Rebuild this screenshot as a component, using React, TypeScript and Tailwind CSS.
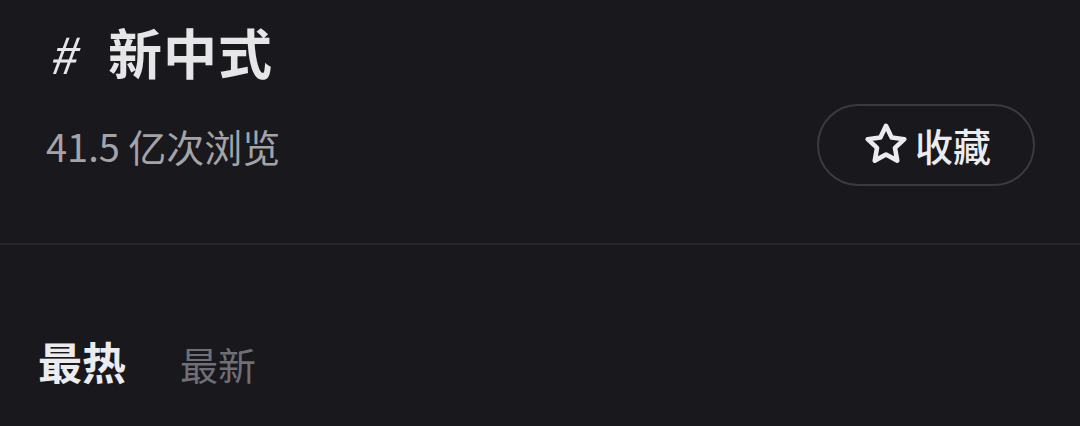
import React from "react";

export default function App() {
  const font = { fontFamily: '"Noto Sans CJK SC", "Noto Sans", sans-serif' };
  return (
    <div className="w-[1080px] h-[426px] bg-[#18181d] overflow-hidden flex flex-col" style={font}>
      <div className="flex flex-col pl-[46px] pr-[45px] pt-[16px] h-[243px]">
        <div className="flex items-center h-[72px]">
          <span className="text-[50px] leading-none italic font-normal text-[#e6e6e9] ml-[2px] w-[60px]">#</span>
          <span className="text-[54px] leading-none font-bold text-[#e6e6e9] tracking-[1px]">新中式</span>
        </div>
        <div className="flex items-center justify-between mt-[18px]">
          <span className="text-[38px] leading-none text-[#a3a3a8]">41.5 亿次浏览</span>
          <div className="w-[218px] h-[82px] rounded-full border-2 border-[#3a3a40] flex items-center justify-center gap-[4px] -mt-[2px]">
            <svg width="50" height="50" viewBox="0 0 24 24" fill="none" stroke="#ececef" strokeWidth="2.2" strokeLinejoin="round">
              <path d="M12 2.8l2.7 5.6 6.1.8-4.5 4.2 1.1 6.1L12 16.6l-5.4 2.9 1.1-6.1-4.5-4.2 6.1-.8z" />
            </svg>
            <span className="text-[38px] leading-none font-medium text-[#ececef]">收藏</span>
          </div>
        </div>
      </div>
      <div className="h-[2px] bg-[#26262c]" />
      <div className="flex items-end pl-[38px] pt-[94px] gap-[54px]">
        <span className="text-[44px] leading-none font-bold text-[#ececef]">最热</span>
        <span className="text-[38px] leading-none text-[#6f6f76]">最新</span>
      </div>
    </div>
  );
}
